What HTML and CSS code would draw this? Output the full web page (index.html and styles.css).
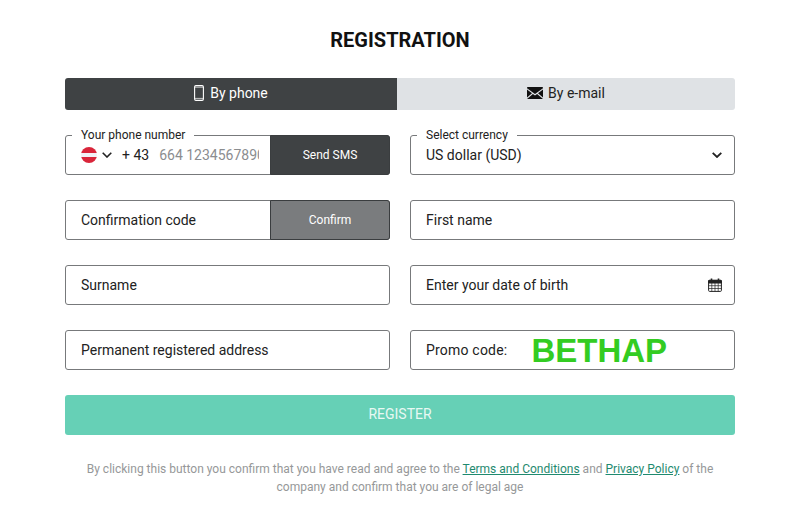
FILE: index.html
```html
<!DOCTYPE html>
<html lang="en">
<head>
  <meta charset="UTF-8">
  <meta name="viewport" content="width=device-width, initial-scale=1.0">
  <title>Registration</title>
  <link rel="stylesheet" href="styles.css">
</head>
<body>
  <main class="page">
    <h1 class="title">REGISTRATION</h1>

    <div class="tabs">
      <a class="tab tab-phone">
        <svg class="tab-icon" width="10" height="16" viewBox="0 0 10 16" fill="none" stroke="currentColor" stroke-width="1.1"><rect x=".6" y=".6" width="8.8" height="14.8" rx="1.3"/><path d="M.6 13.4h8.8M.6 2.2h8.8" stroke-width=".7"/></svg>
        By phone
      </a>
      <a class="tab tab-email">
        <svg class="tab-icon" width="16" height="12" viewBox="0 0 16 12"><path d="M0 1.2 8 7l8-5.8V.8a.8.8 0 0 0-.8-.8H.8A.8.8 0 0 0 0 .8z" fill="#111"/><path d="M0 2.6v8l5-4.4zM16 2.6v8l-5-4.4zM5.9 6.9 0 12h16l-5.9-5.1L8 8.4z" fill="#111"/></svg>
        By e-mail
      </a>
    </div>

    <form class="form-grid">
      <div class="field">
        <span class="float-label">Your phone number</span>
        <span class="flag"></span>
        <svg class="chevron" width="10" height="6" viewBox="0 0 10 6" fill="none" stroke="#222" stroke-width="1.6"><path d="M.7.8 5 5 9.3.8"/></svg>
        <span class="dial">+ 43</span>
        <input class="field-input phone-input" type="text" placeholder="664 1234567890">
        <button class="side-btn" type="button">Send SMS</button>
      </div>

      <div class="field field-select">
        <span class="float-label">Select currency</span>
        <span class="field-text">US dollar (USD)</span>
        <svg class="chevron" width="10" height="6" viewBox="0 0 10 6" fill="none" stroke="#222" stroke-width="1.8"><path d="M.7.8 5 5 9.3.8"/></svg>
      </div>

      <div class="field">
        <input class="field-input" type="text" placeholder="Confirmation code">
        <button class="side-btn side-btn-muted" type="button">Confirm</button>
      </div>

      <div class="field">
        <input class="field-input" type="text" placeholder="First name">
      </div>

      <div class="field">
        <input class="field-input" type="text" placeholder="Surname">
      </div>

      <div class="field field-select">
        <span class="field-text">Enter your date of birth</span>
        <svg class="calendar" width="14" height="14" viewBox="0 0 14 14" fill="none" stroke="#222"><rect x=".6" y="2.2" width="12.8" height="11.2" rx="1"/><path d="M.6 2.6h12.8V5H.6z" fill="#222"/><path d="M3.5.5v2.6M10.5.5v2.6" stroke-width="1.6"/><path d="M.6 7.7h12.8M.6 10.5h12.8M3.8 5v8.4M7 5v8.4M10.2 5v8.4" stroke-width=".7"/></svg>
      </div>

      <div class="field">
        <input class="field-input" type="text" placeholder="Permanent registered address">
      </div>

      <div class="field promo">
        <span class="field-text promo-label">Promo code:</span>
        <span class="promo-value">BETHAP</span>
      </div>
    </form>

    <button class="register" type="button">REGISTER</button>

    <p class="terms">By clicking this button you confirm that you have read and agree to the <a>Terms and Conditions</a> and <a>Privacy Policy</a> of the company and confirm that you are of legal age</p>
  </main>
</body>
</html>
```

FILE: styles.css
```css
* {
  box-sizing: border-box;
}
body {
  margin: 0;
  background: #fff;
  color: #222;
  font-family: Roboto, "Liberation Sans", sans-serif;
  font-size: 14px;
}
.page {
  width: 670px;
  margin: 0 auto;
  padding-top: 28px;
}
.title {
  margin: 0 0 26px;
  font-size: 20px;
  line-height: 24px;
  font-weight: 700;
  text-align: center;
  color: #111;
}
.tabs {
  display: flex;
  height: 32px;
  margin-bottom: 25px;
  border-radius: 3px;
  overflow: hidden;
}
.tab {
  display: flex;
  align-items: center;
  justify-content: center;
  gap: 5px;
  padding-bottom: 2px;
  font-size: 14px;
}
.tab-phone {
  width: 332px;
  gap: 6px;
  background: #3f4244;
  color: #fff;
}
.tab-email {
  flex: 1;
  background: #dfe2e5;
  color: #222;
}
.form-grid {
  display: grid;
  grid-template-columns: 325px 325px;
  column-gap: 20px;
  row-gap: 25px;
}
.field {
  position: relative;
  display: flex;
  align-items: center;
  height: 40px;
  padding-left: 15px;
  border: 1px solid #77797b;
  border-radius: 3px;
  background: #fff;
}
.field-select {
  justify-content: space-between;
  padding-right: 12px;
}
.float-label {
  position: absolute;
  top: -8px;
  left: 6px;
  padding: 0 9px;
  background: #fff;
  font-size: 12px;
  line-height: 14px;
}
.field-input {
  flex: 1;
  min-width: 0;
  height: 100%;
  padding: 0;
  border: none;
  outline: none;
  background: transparent;
  color: #222;
  font: inherit;
}
.field-input::placeholder {
  color: #222;
  opacity: 1;
}
.phone-input {
  margin-right: 11px;
}
.phone-input::placeholder {
  color: #8b8d8f;
}
.flag {
  width: 16px;
  height: 16px;
  border-radius: 50%;
  background: linear-gradient(#d9253a 0 36%, #f1f1f6 36% 64%, #d9253a 64%);
}
.chevron {
  flex: none;
}
.field > .flag + .chevron {
  margin-left: 5px;
}
.dial {
  margin: 0 10px 0 10px;
}
.side-btn {
  flex: none;
  width: 120px;
  height: 40px;
  margin: -1px -1px -1px 0;
  padding: 0;
  border: 1px solid #3a3d3f;
  border-radius: 0 3px 3px 0;
  background: #3f4244;
  color: #fff;
  font: inherit;
  font-size: 12px;
}
.side-btn-muted {
  background: #7a7c7e;
}
.promo {
  gap: 24px;
}
.promo-label {
  letter-spacing: .2px;
}
.promo-value {
  padding-top: 1px;
  font-family: "Liberation Sans", Arial, sans-serif;
  font-size: 33px;
  font-weight: 700;
  line-height: 38px;
  color: #33cc22;
}
.register {
  display: block;
  width: 100%;
  height: 40px;
  margin-top: 25px;
  padding: 0 0 2px;
  border: none;
  border-radius: 3px;
  background: #66d0b6;
  color: #e8f8f3;
  font: inherit;
}
.terms {
  margin: 25px 10px 0;
  font-size: 12px;
  line-height: 18px;
  text-align: center;
  color: #969899;
}
.terms a {
  color: #1f8a6f;
  text-decoration: underline;
}
```
